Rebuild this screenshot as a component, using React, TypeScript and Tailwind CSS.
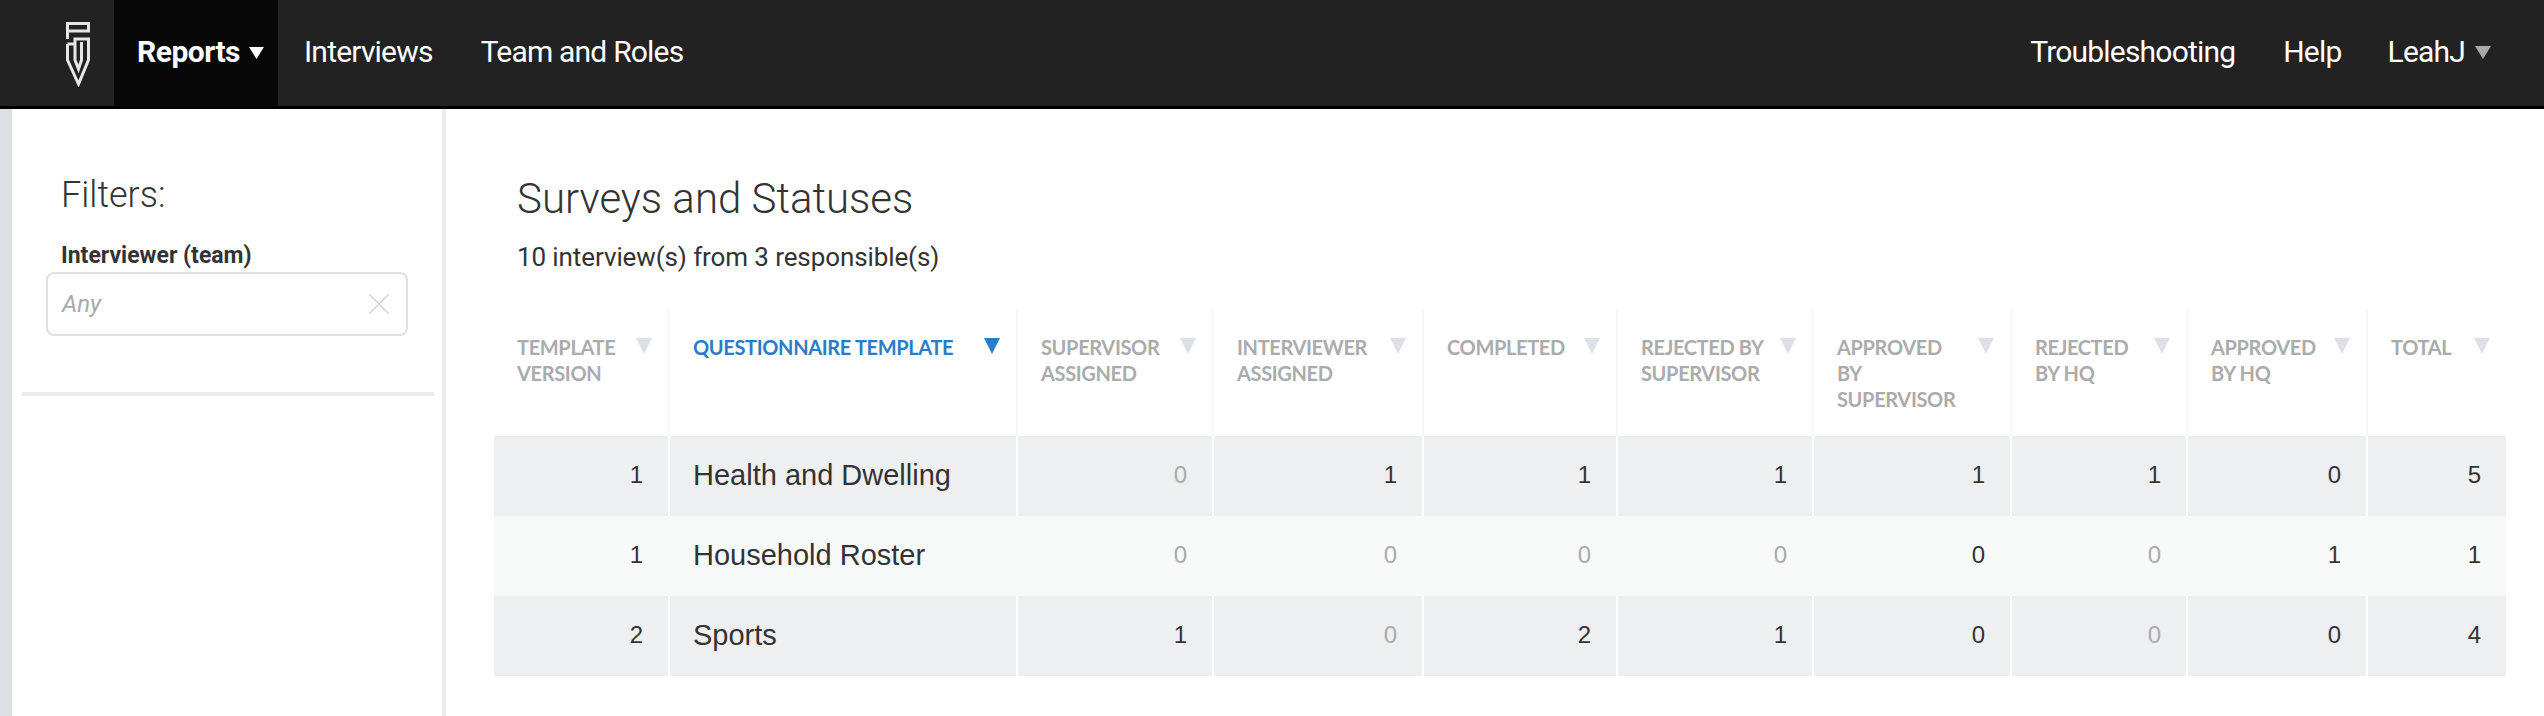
const columns = [
  { title: ["TEMPLATE", "VERSION"], width: "w-[176px]" },
  { title: ["QUESTIONNAIRE TEMPLATE"], width: "w-[348px]", active: true },
  { title: ["SUPERVISOR", "ASSIGNED"], width: "w-[196px]" },
  { title: ["INTERVIEWER", "ASSIGNED"], width: "w-[210px]" },
  { title: ["COMPLETED"], width: "w-[194px]" },
  { title: ["REJECTED BY", "SUPERVISOR"], width: "w-[196px]" },
  { title: ["APPROVED", "BY", "SUPERVISOR"], width: "w-[198px]" },
  { title: ["REJECTED", "BY HQ"], width: "w-[176px]" },
  { title: ["APPROVED", "BY HQ"], width: "w-[180px]" },
  { title: ["TOTAL"], width: "w-[138px]" },
];

// muted lists the count columns shown in grey
const rows = [
  { version: 1, name: "Health and Dwelling", counts: [0, 1, 1, 1, 1, 1, 0, 5], muted: [0], bg: "bg-[#eeeff1]", line: "border-white" },
  { version: 1, name: "Household Roster", counts: [0, 0, 0, 0, 0, 0, 1, 1], muted: [0, 1, 2, 3, 5], bg: "bg-[#f8f9f9]", line: "border-[#f8f9f9]" },
  { version: 2, name: "Sports", counts: [1, 0, 2, 1, 0, 0, 0, 4], muted: [1, 5], bg: "bg-[#eeeff1]", line: "border-white" },
];

function Caret({ className }: { className: string }) {
  return (
    <svg viewBox="0 0 16 16" preserveAspectRatio="none" className={className}>
      <path d="M0 0H16L8 16Z" fill="currentColor" />
    </svg>
  );
}

function Logo() {
  return (
    <svg width="24" height="65" viewBox="0 0 24 65" fill="none" stroke="#e6e6e6" strokeWidth="3">
      <path d="M1.5 17V1.5H22.5V9H2.5" />
      <path d="M1.5 22V38L12.5 62L22.5 38V17H9V38L12.5 47L15.5 38V20" />
      <path d="M1.5 22H9" />
    </svg>
  );
}

export default function App() {
  return (
    <div className="min-h-[716px] bg-white font-['Roboto',sans-serif]">
      <nav className="flex h-[109px] items-stretch justify-between border-b-[3px] border-black bg-[#222222] text-[30px] tracking-[-0.8px] text-white">
        <div className="flex items-stretch">
          <div className="w-[114px] pl-[66px] pt-[22px]">
            <Logo />
          </div>
          <div className="flex w-[164px] items-center gap-[9px] bg-[#070707] pb-[3px] pl-[23px] font-bold tracking-[-0.5px]">
            <span>Reports</span>
            <Caret className="mt-[2px] h-[12px] w-[15px] text-white" />
          </div>
          <div className="flex items-center pb-[3px] pl-[26px]">Interviews</div>
          <div className="flex items-center pb-[3px] pl-[48px]">Team and Roles</div>
        </div>
        <div className="flex items-center pb-[3px] pr-[53px]">
          <span>Troubleshooting</span>
          <span className="ml-[48px]">Help</span>
          <span className="ml-[46px]">LeahJ</span>
          <Caret className="ml-[10px] mt-[2px] h-[13px] w-[16px] text-[#a9a9a9]" />
        </div>
      </nav>

      <div className="flex min-h-[607px]">
        <aside className="w-[446px] shrink-0 border-r-4 border-l-[12px] border-r-[#ebebeb] border-l-[#dde0e4] pl-[10px] pr-[8px]">
          <h2 className="pl-[39px] pt-[59px] text-[36px] font-light leading-[54px] text-[#333333]">Filters:</h2>
          <label className="mt-[19px] block pl-[39px] text-[23px] font-bold leading-[30px] text-[#333333]">
            Interviewer (team)
          </label>
          <div className="ml-[24px] mt-[1px] flex h-[64px] w-[362px] items-center justify-between rounded-[8px] border-2 border-[#dde0e4] pl-[14px] pr-[17px]">
            <span className="text-[24px] italic text-[#a9a9a9]">Any</span>
            <svg width="20" height="20" viewBox="0 0 20 20" stroke="#d4d4d4" strokeWidth="1.5" fill="none">
              <path d="M0 0L20 20M20 0L0 20" />
            </svg>
          </div>
          <hr className="mt-[56px] h-[4px] border-0 bg-[#ebebeb]" />
        </aside>

        <main className="min-w-0 flex-1 pl-[48px]">
          <h1 className="pl-[23px] pt-[63px] text-[42px] font-light leading-[54px] text-[#333333]">Surveys and Statuses</h1>
          <p className="mt-[13px] pl-[23px] text-[26px] leading-[36px] tracking-[-0.1px] text-[#333333]">10 interview(s) from 3 responsible(s)</p>

          <table className="mt-[35px] table-fixed border-separate border-spacing-0">
            <thead>
              <tr>
                {columns.map((col) => (
                  <th
                    key={col.title.join(" ")}
                    className={`${col.width} h-[126px] border-r-2 border-[#f6f6f6] pl-[23px] pr-[16px] pt-[24px] align-top last:border-r-0`}
                  >
                    <div className="flex items-start justify-between">
                      <div
                        className={`text-left font-['Lato',sans-serif] text-[20px] font-bold leading-[26px] tracking-[-0.35px] ${
                          col.active ? "text-[#2a7cc7]" : "text-[#a9abad]"
                        }`}
                      >
                        {col.title.map((t) => (
                          <div key={t} className="whitespace-nowrap">{t}</div>
                        ))}
                      </div>
                      <Caret className={`mt-[4px] h-[16px] w-[16px] shrink-0 ${col.active ? "text-[#2a7cc7]" : "text-[#dde0e4]"}`} />
                    </div>
                  </th>
                ))}
              </tr>
            </thead>
            <tbody className="font-['Liberation_Sans',sans-serif] text-[#333333]">
              {rows.map((row) => (
                <tr key={row.name} className={`${row.bg} h-[80px]`}>
                  <td className={`border-r-2 ${row.line} pb-[3px] pr-[25px] text-right text-[24px]`}>{row.version}</td>
                  <td className={`border-r-2 ${row.line} pl-[23px] text-[29px]`}>{row.name}</td>
                  {row.counts.map((n, i) => (
                    <td
                      key={i}
                      className={`border-r-2 pb-[3px] pr-[25px] text-right text-[24px] last:border-r-0 ${row.line} ${
                        row.muted.includes(i) ? "text-[#a9abad]" : ""
                      }`}
                    >
                      {n}
                    </td>
                  ))}
                </tr>
              ))}
            </tbody>
          </table>
        </main>
      </div>
    </div>
  );
}
